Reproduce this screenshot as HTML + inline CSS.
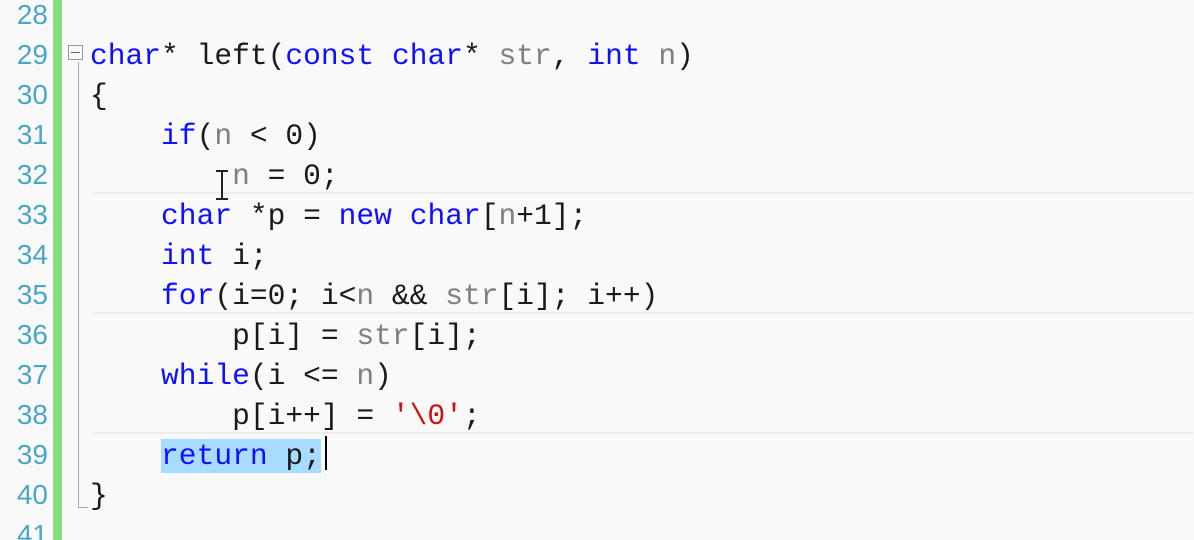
<!DOCTYPE html>
<html><head><style>
html,body{margin:0;width:1194px;height:540px;background:#f9f9f9;overflow:hidden;position:relative;font-family:"Liberation Mono",monospace;}
.ln{position:absolute;left:0;width:48px;text-align:right;color:#4aa6c6;font-size:28px;line-height:40px;font-family:"Liberation Sans",sans-serif;}
.bar{position:absolute;left:53px;top:0;width:9px;height:540px;background:#84e07c;}
.code{position:absolute;left:90px;top:-4px;font-size:29.6px;line-height:40px;white-space:pre;color:#1a1a1a;}
.k{color:#1010ff}.g{color:#808080}.r{color:#d01010}
.sel{background:#a8dcff}
.gl{position:absolute;height:2px;background:#ececec}
</style></head><body>
<div class="bar"></div>
<div class="ln" style="top:-5px">28<br>29<br>30<br>31<br>32<br>33<br>34<br>35<br>36<br>37<br>38<br>39<br>40<br>41</div>
<div style="position:absolute;left:68px;top:45px;width:15px;height:15px;border:1px solid #999;box-sizing:border-box"></div>
<div style="position:absolute;left:71px;top:52px;width:9px;height:1px;background:#666"></div>
<div style="position:absolute;left:78px;top:62px;width:1px;height:446px;background:#aaa"></div>
<div style="position:absolute;left:78px;top:507px;width:10px;height:1px;background:#aaa"></div>
<div class="gl" style="left:93px;top:192px;width:1100px"></div>
<div class="gl" style="left:93px;top:312px;width:1100px"></div>
<div class="gl" style="left:93px;top:432px;width:1100px"></div>
<div class="code"><span> </span>
<span class="k">char</span>* left(<span class="k">const</span> <span class="k">char</span>* <span class="g">str</span>, <span class="k">int</span> <span class="g">n</span>)
{
    <span class="k">if</span>(<span class="g">n</span> &lt; 0)
        <span class="g">n</span> = 0;
    <span class="k">char</span> *p = <span class="k">new</span> <span class="k">char</span>[<span class="g">n</span>+1];
    <span class="k">int</span> i;
    <span class="k">for</span>(i=0; i&lt;<span class="g">n</span> &amp;&amp; <span class="g">str</span>[i]; i++)
        p[i] = <span class="g">str</span>[i];
    <span class="k">while</span>(i &lt;= <span class="g">n</span>)
        p[i++] = <span class="r">'\0'</span>;
    <span class="sel"><span class="k">return</span> p;</span>
}
</div>
<div style="position:absolute;left:325px;top:436px;width:2px;height:34px;background:#000"></div>
<div style="position:absolute;left:221px;top:170px;width:2px;height:30px;background:#222"></div>
<div style="position:absolute;left:216px;top:170px;width:12px;height:2px;background:#222"></div>
<div style="position:absolute;left:216px;top:198px;width:12px;height:2px;background:#222"></div>
</body></html>
